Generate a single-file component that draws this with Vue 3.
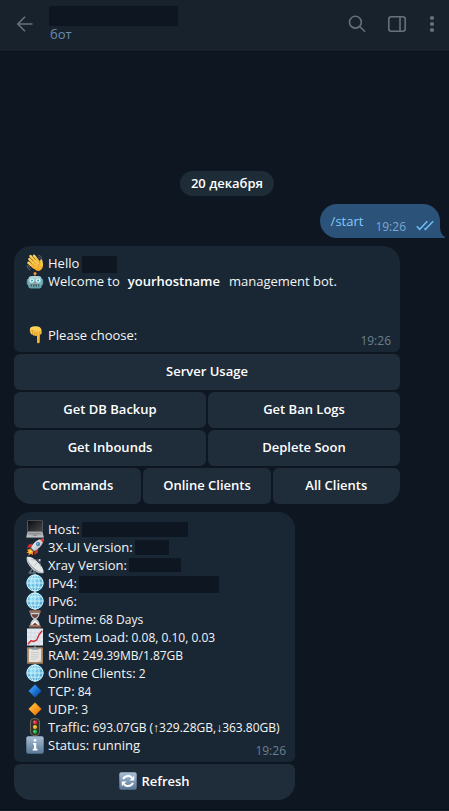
<script setup>
const keyboard = [
  ['Server Usage'],
  ['Get DB Backup', 'Get Ban Logs'],
  ['Get Inbounds', 'Deplete Soon'],
  ['Commands', 'Online Clients', 'All Clients'],
]

const status = [
  { icon: 'laptop', text: 'Host:', mask: { width: '106px', height: '15px' } },
  { icon: 'rocket', text: '3X-UI Version:', mask: { width: '34px', height: '15px' } },
  { icon: 'dish', text: 'Xray Version:', mask: { width: '52px', height: '14px' } },
  { icon: 'globe', text: 'IPv4:', mask: { width: '140px', height: '17px' } },
  { icon: 'globe', text: 'IPv6:' },
  { icon: 'hourglass', text: 'Uptime:', value: '68 Days' },
  { icon: 'chart', text: 'System Load:', value: '0.08, 0.10, 0.03' },
  { icon: 'clipboard', text: 'RAM:', value: '249.39MB/1.87GB' },
  { icon: 'globe', text: 'Online Clients:', value: '2' },
  { icon: 'blue', text: 'TCP:', value: '84' },
  { icon: 'orange', text: 'UDP:', value: '3' },
  { icon: 'traffic', text: 'Traffic:', value: '693.07GB (↑329.28GB,↓363.80GB)' },
  { icon: 'info', text: 'Status: running', time: '19:26' },
]
</script>

<template>
  <div class="app">
    <svg class="sprite" aria-hidden="true">
      <defs>
        <linearGradient id="g-skin" x1="0" y1="0" x2="0" y2="1"><stop offset="0" stop-color="#ffd75e" /><stop offset="1" stop-color="#f5a623" /></linearGradient>
        <linearGradient id="g-tile" x1="0" y1="0" x2="0" y2="1"><stop offset="0" stop-color="#a9bfd6" /><stop offset="1" stop-color="#587796" /></linearGradient>
        <linearGradient id="g-blue" x1="0" y1="0" x2="1" y2="1"><stop offset="0.3" stop-color="#2f8ff0" /><stop offset="0.8" stop-color="#0a4fa8" /></linearGradient>
        <linearGradient id="g-orange" x1="0" y1="0" x2="1" y2="1"><stop offset="0.3" stop-color="#ffb02e" /><stop offset="0.8" stop-color="#ef7d0c" /></linearGradient>
        <linearGradient id="g-metal" x1="0" y1="0" x2="1" y2="1"><stop offset="0" stop-color="#ffffff" /><stop offset="1" stop-color="#a3a8ad" /></linearGradient>
        <radialGradient id="g-globe" cx="0.4" cy="0.35" r="0.7"><stop offset="0" stop-color="#8fdcf5" /><stop offset="1" stop-color="#3fa0cd" /></radialGradient>
        <linearGradient id="g-robot" x1="0" y1="0" x2="0" y2="1"><stop offset="0" stop-color="#b6d8dc" /><stop offset="1" stop-color="#5b9ba6" /></linearGradient>
        <linearGradient id="g-screen" x1="0" y1="0" x2="1" y2="1"><stop offset="0" stop-color="#0d0d0f" /><stop offset="1" stop-color="#46474b" /></linearGradient>
      </defs>

      <symbol id="e-wave" viewBox="0 0 18 18">
        <g fill="none" stroke="#59636c" stroke-width="1" stroke-linecap="round"><path d="M1 11.5Q1.2 14.8 4 16.2M2.8 11.5Q3 13.6 4.6 14.7M12.7 1.2Q15 1.6 16 4M12.3 3Q13.8 3.2 14.5 4.8" /></g>
        <g stroke="url(#g-skin)" stroke-width="2.5" stroke-linecap="round"><path d="M3.4 5.2L8.8 11" /><path d="M4.5 2.2L10.8 9" /><path d="M8 1.8L12.8 7.7" /><path d="M2.5 8.7L7.7 13.2" /></g>
        <path fill="url(#g-skin)" d="M5.5 8L10.8 5.2L14 9.2C14.4 7.6 13.5 6.5 15 5.2C16.4 4.9 16.3 6.3 16.8 8.7C17.4 12 16.8 14.3 14.8 16.1C12.1 18.2 9 16.2 6 13Z" />
        <path d="M5.6 5.6L10 10M8.2 4L12 8M4.7 8.7L8.8 12.4M14.2 9.3Q12 10.3 12.2 12.7" fill="none" stroke="#c9811b" stroke-width=".6" />
      </symbol>

      <symbol id="e-robot" viewBox="0 0 18 18">
        <path d="M9 1V4" stroke="#75898e" /><circle cx="9" cy="1.6" r="1.5" fill="#ef9a46" />
        <rect x=".8" y="7" width="2.5" height="6" rx="1" fill="#5f9aa2" /><rect x="14.7" y="7" width="2.5" height="6" rx="1" fill="#5f9aa2" />
        <path d="M2.3 7.2Q2.5 4 6 4H12Q15.5 4 15.7 7.2V14.3Q15.5 16.5 13 16.5H5Q2.5 16.5 2.3 14.3Z" fill="url(#g-robot)" />
        <circle cx="5.9" cy="8.6" r="2.1" fill="#e8ffff" /><circle cx="12.1" cy="8.6" r="2.1" fill="#e8ffff" />
        <circle cx="5.9" cy="8.6" r="1.1" fill="#2cabb9" /><circle cx="12.1" cy="8.6" r="1.1" fill="#2cabb9" />
        <path d="M9 9.3L10 11.3H8Z" fill="#dc604f" /><rect x="4.5" y="12.3" width="9" height="2.2" rx="1" fill="#405f67" /><path d="M6.5 12.3V14.5M9 12.3V14.5M11.5 12.3V14.5" stroke="#b5d8d9" stroke-width=".6" />
      </symbol>

      <symbol id="e-down" viewBox="0 0 18 18">
        <path d="M4.8 1.2Q8 -.1 12 .6Q15.3 1.4 15.6 4.8V7.4Q15 9 13.8 8.2V15.9Q13 18.2 11 16.7V9.4Q9.9 10.4 8.7 9.5Q7.4 10 6.6 8.4Q4.4 8.8 4.4 6.6Q3 3.2 4.8 1.2Z" fill="url(#g-skin)" />
        <path d="M5 4.5Q7.5 3.2 8.3 5.6M6.6 5.4V8.4M8.8 5.8V9.4M11 5.6V9.4M13.8 5.4V8.2" fill="none" stroke="#c9811b" stroke-width=".6" />
      </symbol>

      <symbol id="e-laptop" viewBox="0 0 18 18">
        <rect x="1.3" y=".4" width="15.4" height="11.6" rx=".6" fill="#6d6e70" /><rect x="2" y="1" width="14" height="10" fill="url(#g-screen)" />
        <path d="M1.5 12H16.5L17.6 16.2H.4Z" fill="#b6b7b7" /><path d="M2.8 12.7H15.2L15.8 14.5H2.2Z" fill="#8b8d8f" /><path d="M.4 16.2H17.6V17.5H.4Z" fill="#dedede" />
        <path d="M7 14.8H11L11.2 16H6.8Z" fill="#8d8f91" />
      </symbol>

      <symbol id="e-rocket" viewBox="0 0 18 18">
        <path d="M5 10.5L1.1 11.8L2.2 13.4L.4 15.1L3 14.9L2.2 17.6L5.1 15.7L6.5 17.3L7.4 13Z" fill="#ff9e21" /><path d="M4.6 12L2.8 15.2L6 13.7Z" fill="#ffe469" />
        <path d="M6.9 5.5L3 6.3L.8 10L5.5 9.2Z" fill="#cf3030" /><path d="M12.3 11L11.8 14.7L8 17.1L8.8 12.4Z" fill="#cf3030" />
        <path d="M4.8 10.5Q7 4.3 12.6 1.7Q15 .5 17.6.4Q17.7 3 16.5 5.5Q13.7 11 7.5 13.3Z" fill="url(#g-metal)" />
        <path d="M13.8 1.2Q15.7.4 17.6.4Q17.7 2.5 16.8 4.5Z" fill="#d63732" /><circle cx="12" cy="6" r="2" fill="#366fa2" /><circle cx="11.7" cy="5.7" r="1" fill="#7dbbe1" />
        <path d="M5.1 9.8L8.2 12.9L7 13.6L4.4 11Z" fill="#4e5966" />
      </symbol>

      <symbol id="e-dish" viewBox="0 0 18 18">
        <path d="M8.2 10.5L3.6 16.4M7.2 12L8.3 16.4M2.6 17H10" stroke="#5f7382" stroke-width="1.6" fill="none" />
        <path d="M1 .8Q5.7-.1 11.7 6Q18.2 12 17.5 16.9Q12.2 18.8 5.6 12.2Q-.7 6 1 .8Z" fill="#e3e6e8" />
        <path d="M1 .8Q.3 7.2 6.8 12.8Q12 18 17.5 16.9Q11.8 15.8 6.6 10.6Q1.8 5.8 1 .8Z" fill="#a5adb2" />
        <path d="M8.5 9.5L13.6 4.2M5 3.6L13.6 4.2L14.5 11" fill="none" stroke="#9aa2a8" stroke-width=".6" /><circle cx="13.7" cy="4" r="1" fill="#d7dce0" />
      </symbol>

      <symbol id="e-globe" viewBox="0 0 18 18">
        <circle cx="9" cy="9" r="8.5" fill="url(#g-globe)" />
        <g fill="none" stroke="#d9f6ff" stroke-width=".9"><circle cx="9" cy="9" r="8.1" /><ellipse cx="9" cy="9" rx="4.2" ry="8.2" /><path d="M9 .8V17.2M.8 9H17.2M2.2 4.8H15.8M2.2 13.2H15.8" /></g>
      </symbol>

      <symbol id="e-hourglass" viewBox="0 0 18 18">
        <path d="M4.3 2H13.7Q14 6.6 10.2 9Q14 11.4 13.7 16H4.3Q4 11.4 7.8 9Q4 6.6 4.3 2Z" fill="#c7d1d5" />
        <path d="M5.3 4.2H12.7Q12 6.8 9 8.3Q6 6.8 5.3 4.2Z" fill="#704238" /><path d="M9 10.5Q12.4 13.1 12.8 15.7H5.2Q5.6 13.1 9 10.5Z" fill="#fff" />
        <path d="M9 12.5L12.6 15.8H5.4Z" fill="#704238" /><rect x="3" y=".4" width="12" height="2.4" rx=".7" fill="#8b5f4b" /><rect x="3" y="15.2" width="12" height="2.4" rx=".7" fill="#8b5f4b" />
        <path d="M3.7.9H14M3.7 15.6H14" stroke="#c79b7e" stroke-width=".6" />
      </symbol>

      <symbol id="e-chart" viewBox="0 0 18 18">
        <rect x="1" y=".5" width="16" height="17" fill="#e4e9ef" /><path d="M1 4.7H17M1 9H17M1 13.2H17M5 .5V17.5M9 .5V17.5M13 .5V17.5" stroke="#cdd8e2" stroke-width=".7" />
        <path d="M1.8 16.2L5 12.7L7.2 13.5L10.6 12.2L13 6.8L16.2 2.7" fill="none" stroke="#d32b32" stroke-width="1.4" stroke-linejoin="round" />
      </symbol>

      <symbol id="e-clipboard" viewBox="0 0 18 18">
        <rect x="1" y="1.2" width="16" height="16.5" rx=".8" fill="#a9845d" /><rect x="2.8" y="2.8" width="12.4" height="13.2" fill="#e4e3df" />
        <path d="M5 6.5H13M5 8.7H13M5 10.9H13M5 13.1H10.5" stroke="#bfc0bf" stroke-width=".7" /><path d="M5.5 3.8V2.1H7.6Q7.5.2 9 .2T10.4 2.1H12.5V3.8Z" fill="#89979f" />
        <path d="M12.2 16H15.2V13Z" fill="#c9cac6" />
      </symbol>

      <symbol id="e-blue" viewBox="0 0 18 18"><path d="M9 2.5L15.5 9L9 15.5L2.5 9Z" fill="url(#g-blue)" /></symbol>
      <symbol id="e-orange" viewBox="0 0 18 18"><path d="M9 2.5L15.5 9L9 15.5L2.5 9Z" fill="url(#g-orange)" /></symbol>

      <symbol id="e-traffic" viewBox="0 0 18 18">
        <rect x="4.5" y=".5" width="9" height="17" rx="3.5" fill="#33312e" stroke="#776d64" stroke-width=".9" />
        <circle cx="9" cy="4.3" r="2.1" fill="#e52b38" /><circle cx="9" cy="9" r="2.1" fill="#f3b619" /><circle cx="9" cy="13.7" r="2.1" fill="#19b74a" />
        <circle cx="8.5" cy="3.8" r=".7" fill="#ff8a8c" /><circle cx="8.5" cy="8.5" r=".7" fill="#ffe66f" /><circle cx="8.5" cy="13.2" r=".7" fill="#86ee8e" />
      </symbol>

      <symbol id="e-info" viewBox="0 0 18 18">
        <rect x=".3" y=".3" width="17.4" height="17.4" rx="2" fill="url(#g-tile)" /><circle cx="9" cy="4.3" r="1.4" fill="#fff" /><path d="M7 7H10.2V12.8H11.5V14.5H6.7V12.8H8V8.5H7Z" fill="#fff" />
      </symbol>

      <symbol id="e-refresh" viewBox="0 0 18 18">
        <rect x=".3" y=".3" width="17.4" height="17.4" rx="2" fill="url(#g-tile)" />
        <path d="M4 7.1Q6 3.7 10 4.1Q11.8 4.4 13 5.9M14 10.9Q12 14.3 8 13.9Q6.2 13.6 5 12.1" fill="none" stroke="#fff" stroke-width="2" />
        <path d="M15.2 3.7V8.5H10.4ZM2.8 14.3V9.5H7.6Z" fill="#fff" />
      </symbol>
    </svg>

    <header class="bar">
      <button class="tool" aria-label="Назад">
        <svg width="18" height="18" viewBox="0 0 18 18"><path d="M16.5 9H2M9 1.8L1.8 9L9 16.2" /></svg>
      </button>
      <div class="peer">
        <span class="mask peer-name"></span>
        <span class="peer-kind">бот</span>
      </div>
      <nav class="tools">
        <button class="tool" aria-label="Поиск">
          <svg width="18" height="18" viewBox="0 0 18 18"><circle cx="7.4" cy="7.2" r="5.9" /><path d="M11.7 11.5L17 16.8" /></svg>
        </button>
        <button class="tool" aria-label="Панель">
          <svg width="18" height="18" viewBox="0 0 18 18"><rect x=".8" y="1.8" width="16.4" height="14.4" rx="2.5" /><path d="M12 1.8V16.2" /></svg>
        </button>
        <button class="tool" aria-label="Меню">
          <svg class="dots" width="8" height="18" viewBox="0 0 8 18"><circle cx="4" cy="3" r="2.1" /><circle cx="4" cy="9" r="2.1" /><circle cx="4" cy="15" r="2.1" /></svg>
        </button>
      </nav>
    </header>

    <main class="chat">
      <div class="date">20 декабря</div>

      <div class="out">
        <a class="command" href="#start">/start</a>
        <time class="time">19:26</time>
        <svg class="ticks" width="18" height="11" viewBox="0 0 18 11"><path d="M.8 6.2L3.7 9.3L11.3 1.2M8.4 8.4L9.4 9.3L17.2 1.2" /></svg>
        <svg class="tail" width="7" height="12" viewBox="0 0 7 12"><path d="M0 0H1C1 5 2.5 9 6 11Q7 12 5 12H0Z" /></svg>
      </div>

      <section class="group wide">
        <div class="bubble">
          <p class="line"><svg class="emoji"><use href="#e-wave" /></svg>Hello<span class="mask hello-mask"></span></p>
          <p class="line"><svg class="emoji"><use href="#e-robot" /></svg>Welcome to<strong class="host">yourhostname</strong>management bot.</p>
          <p class="line spaced"><svg class="emoji"><use href="#e-down" /></svg>Please choose:<time class="time">19:26</time></p>
        </div>
        <div v-for="(row, i) in keyboard" :key="i" class="keys">
          <button v-for="label in row" :key="label" class="key">{{ label }}</button>
        </div>
      </section>

      <section class="group report">
        <div class="bubble">
          <p v-for="item in status" :key="item.text + item.icon" class="line">
            <svg class="emoji"><use :href="'#e-' + item.icon" /></svg>
            <span>{{ item.text }}<span v-if="item.value" class="value">&nbsp;{{ item.value }}</span></span>
            <span v-if="item.mask" class="mask" :style="item.mask"></span>
            <time v-if="item.time" class="time">{{ item.time }}</time>
          </p>
        </div>
        <div class="keys">
          <button class="key"><svg class="emoji"><use href="#e-refresh" /></svg>Refresh</button>
        </div>
      </section>
    </main>
    <footer class="edge"></footer>
  </div>
</template>

<style>
body {
  background: #0e1621;
}
</style>

<style scoped>
.app {
  display: flex;
  flex-direction: column;
  min-height: 100vh;
  background: #0e1621;
  color: #f5f5f5;
  font: 13px/18px "Open Sans", "Noto Sans", sans-serif;
}
.sprite {
  position: absolute;
  width: 0;
  height: 0;
}
.bar {
  box-sizing: border-box;
  display: flex;
  align-items: center;
  gap: 15px;
  height: 52px;
  padding: 0 13px 4px 16px;
  background: #18222c;
  border-bottom: 1px solid #0b121a;
}
.tool {
  display: flex;
  padding: 0;
  border: 0;
  background: none;
  color: #65727d;
}
.tool svg {
  fill: none;
  stroke: currentColor;
  stroke-width: 1.6;
}
.tool .dots {
  fill: currentColor;
  stroke: none;
}
.peer {
  display: flex;
  flex-direction: column;
  flex: 1;
  padding-top: 1px;
}
.mask {
  background: #0e1621;
}
.peer-name {
  width: 129px;
  height: 20px;
}
.peer-kind {
  padding-left: 1px;
  color: #6c8cb0;
  line-height: 16px;
}
.tools {
  display: flex;
  gap: 22px;
}
.chat {
  display: flex;
  flex: 1;
  flex-direction: column;
  align-items: flex-start;
  justify-content: flex-end;
  gap: 8px;
  padding: 24px 9px 9px 14px;
}
.date {
  align-self: center;
  padding: 3px 11px 4px;
  border-radius: 13px;
  background: #1e2c38;
  color: #fff;
  font-weight: 600;
}
.out {
  position: relative;
  box-sizing: border-box;
  display: flex;
  align-self: flex-end;
  height: 34px;
  padding: 8px 6px 8px 11px;
  border-radius: 17px 17px 0 17px;
  background: #2b5278;
}
.command {
  margin-right: 12px;
  color: #83caff;
  text-decoration: none;
}
.time {
  color: #6d7f8f;
  font-size: 12px;
  line-height: 16px;
}
.out .time {
  margin-top: 7px;
  color: #7da8d3;
}
.ticks {
  margin: 8px 0 0 10px;
  fill: none;
  stroke: #6cb8f4;
  stroke-width: 1.6;
}
.tail {
  position: absolute;
  right: -6px;
  bottom: 0;
  fill: #2b5278;
}
.group {
  display: flex;
  flex-direction: column;
  gap: 2px;
  max-width: 100%;
}
.wide {
  width: 100%;
  max-width: 386px;
}
.report {
  min-width: 281px;
}
.bubble {
  padding: 8px 12px;
  border-radius: 17px 17px 6px 6px;
  background: #192734;
}
.report .bubble {
  padding-right: 11px;
}
.line {
  display: flex;
  height: 18px;
  margin: 0;
  white-space: nowrap;
}
.spaced {
  margin-top: 36px;
}
.emoji {
  flex: none;
  width: 18px;
  height: 18px;
  margin-right: 4px;
}
.value {
  font-size: 12px;
}
.line .mask {
  margin: 2px 0 0 2px;
}
.line .hello-mask {
  width: 35px;
  height: 17px;
  margin-left: 3px;
}
.host {
  margin: 0 9px 0 8px;
  color: #fff;
  font-weight: 600;
}
.line .time {
  margin: 7px -3px 0 auto;
}
.report .time {
  margin-right: -2px;
}
.keys {
  display: flex;
  gap: 2px;
}
.key {
  display: flex;
  flex: 1 1 0;
  align-items: center;
  justify-content: center;
  height: 36px;
  padding: 0 0 2px;
  border: 0;
  border-radius: 6px;
  background: #1f2c39;
  color: #fff;
  font: inherit;
  font-weight: 600;
}
.keys:last-child .key:first-child {
  border-bottom-left-radius: 17px;
}
.keys:last-child .key:last-child {
  border-bottom-right-radius: 17px;
}
.edge {
  height: 1px;
  border-top: 1px solid #090f16;
  background: #18222c;
}
</style>
